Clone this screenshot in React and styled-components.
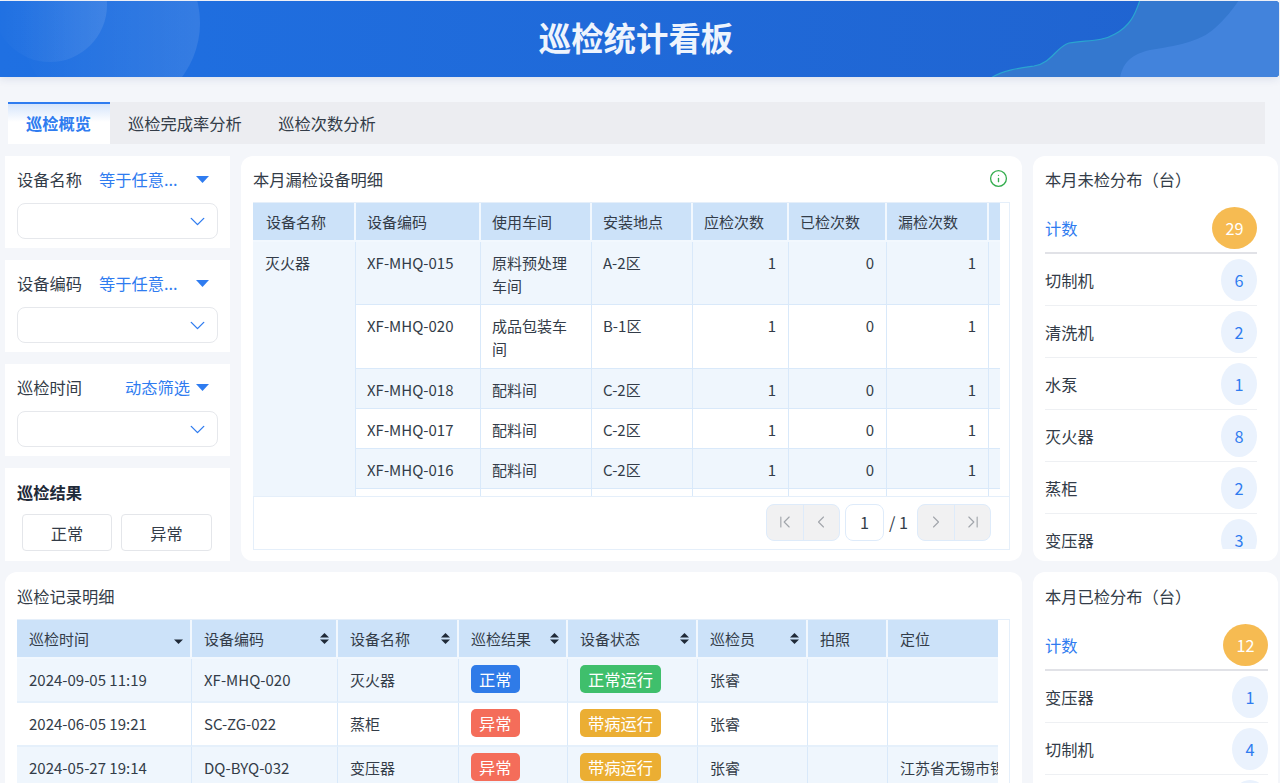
import React from 'react'
import styled, { createGlobalStyle } from 'styled-components'
import { ChevronDown, ChevronFirst, ChevronLast, ChevronLeft, ChevronRight, Info } from 'lucide-react'

const GlobalStyle = createGlobalStyle`
  html, body { margin: 0; padding: 0; height: 100%; overflow: hidden; }
  body {
    background: #f4f6fa;
    color: #333c48;
    font-family: "Noto Sans CJK SC", "Noto Sans", sans-serif;
    font-size: 16.25px;
  }
  * { box-sizing: border-box; }
`

const Page = styled.div`
  height: 783px;
  overflow: hidden;
  padding-top: 1px;
`

const Banner = styled.header`
  position: relative;
  height: 76px;
  margin-right: 1px;
  border-radius: 0 4px 4px 0;
  overflow: hidden;
  background: linear-gradient(90deg, #1f70e2 0%, #2063cf 100%);
  box-shadow: 0 2px 8px rgba(30, 60, 120, 0.12);
  display: flex;
  align-items: center;
  justify-content: center;
`

const BannerArt = styled.svg`
  position: absolute;
  left: 0;
  top: 0;
`

const BannerTitle = styled.h1`
  position: relative;
  margin: 0 0 5px -7px;
  color: #eef4fd;
  font-size: 32.4px;
  font-weight: 700;
  line-height: 44px;
`

const TabBar = styled.nav`
  display: flex;
  height: 42px;
  margin: 25px 15px 12px 8px;
  background: #ecedf1;
`

const Tab = styled.div`
  display: flex;
  align-items: center;
  padding: 0 18.5px 0 18px;
  color: ${p => (p.$active ? '#2f7cf0' : '#333c48')};
  font-weight: ${p => (p.$active ? 600 : 400)};
  ${p => p.$active && `
    padding: 0 19px 2px 18px;
    border-top: 2px solid #2f7cf0;
    background: linear-gradient(180deg, #d6e5fb 0%, #ffffff 45%);
  `}
`

const Dashboard = styled.main`
  display: grid;
  grid-template-columns: 225px 781px 245px;
  grid-template-rows: 405px 400px;
  column-gap: 11px;
  row-gap: 11px;
  padding-left: 5px;
`

const FilterColumn = styled.aside`
  display: grid;
  grid-template-rows: 92px 92px 92px 93px;
  row-gap: 12px;
`

const FilterCard = styled.section`
  background: #fff;
  padding: ${p => (p.$result ? '12px' : '11px')} 12px 0;
`

const FilterHead = styled.div`
  display: flex;
  align-items: center;
  height: 24px;
  margin-bottom: 12px;
`

const FilterLabel = styled.span`
  flex: none;
  width: 82px;
`

const FilterMode = styled.span`
  flex: 1;
  color: #2f7cf0;
  text-align: ${p => (p.$right ? 'right' : 'left')};
  padding-right: ${p => (p.$right ? '6px' : '7px')};
`

const Caret = styled.svg`
  flex: none;
  margin-right: 9px;
`

const SelectBox = styled.div`
  display: flex;
  align-items: center;
  justify-content: flex-end;
  height: 36px;
  width: 201px;
  padding-right: 7px;
  border: 1px solid #e6e8ec;
  border-radius: 8px;
  color: #2f7cf0;
`

const ResultTitle = styled.div`
  font-weight: 700;
  line-height: 24px;
  color: #1f2a38;
`

const ResultButtons = styled.div`
  display: flex;
  gap: 9px;
  margin: 10px 0 0 5px;
`

const ResultButton = styled.button`
  flex: 0 0 ${p => p.$width};
  height: 37px;
  padding: 0;
  background: #fff;
  border: 1px solid #e4e6ea;
  border-radius: 4px;
  color: #333c48;
  font: inherit;
`

const Card = styled.section`
  background: #fff;
  border-radius: 12px;
  padding: ${p => p.$pad || '11px 12px 12px'};
  overflow: hidden;
  ${p => p.$wide && 'grid-column: 1 / span 2;'}
`

const CardHead = styled.div`
  display: flex;
  align-items: center;
  justify-content: space-between;
  height: 24px;
  margin-bottom: ${p => p.$gap || '11px'};
`

const CardTitle = styled.h2`
  margin: 0;
  font-size: inherit;
  font-weight: 400;
`

const InfoMark = styled.span`
  display: flex;
  margin: -2px 2px 0 0;
  color: #34ad4e;
`

const TableFrame = styled.div`
  border: 1px solid #e5effa;
  border-left: 0;
`

const TableClip = styled.div`
  width: ${p => p.$width};
  height: ${p => p.$height};
  overflow: hidden;
`

const Grid = styled.table`
  table-layout: fixed;
  border-collapse: separate;
  border-spacing: 0;
  width: ${p => p.$width};
  font-size: 15px;
`

const HeadCell = styled.th`
  position: relative;
  height: 39px;
  padding: 0 12px 1px;
  background: #cce2f9;
  border-right: 2px solid #f2f8fe;
  border-bottom: 2px solid #f2f8fe;
  font-weight: 400;
  text-align: left;
  white-space: nowrap;
`

const MissedHead = styled(HeadCell)`
  padding-left: 11px;
  &:first-child { padding-left: 13px; }
`

const SortIcon = styled.svg`
  position: absolute;
  right: 7px;
  top: 13px;
`

const Row = styled.tr`
  height: ${p => p.$height || 'auto'};
  background: ${p => (p.$odd ? '#eff6fd' : '#fff')};
`

const Cell = styled.td`
  padding: 9px 12px 7px 11px;
  line-height: 23px;
  border-right: 1px solid #d9e9fa;
  border-bottom: 1px solid #d9e9fa;
  text-align: ${p => (p.$num ? 'right' : 'left')};
  vertical-align: top;
`

const RecordCell = styled.td`
  height: 44px;
  padding: 0 12px 2px;
  border-right: 1px solid #d9e9fa;
  border-bottom: 2px solid #e5f0fb;
  white-space: nowrap;
  overflow: hidden;
`

const MergedCell = styled(Cell)`
  padding-left: 12px;
  background: #eff6fd;
`

const Tag = styled.span`
  display: inline-block;
  height: 28px;
  padding: 0 8px;
  border-radius: 5px;
  background: ${p => p.$color};
  color: #fff;
  font-size: 16.25px;
  line-height: 28px;
  vertical-align: middle;
`

const Pager = styled.div`
  display: flex;
  align-items: center;
  justify-content: flex-end;
  height: 53px;
  padding: 0 18px 2px 0;
  border-top: 1px solid #e5effa;
  border-left: 1px solid #e5effa;
`

const PagerGroup = styled.div`
  display: flex;
  height: 37px;
  border: 1px solid #deebfa;
  border-radius: 8px;
  background: #f1f1f2;
  overflow: hidden;
`

const PagerButton = styled.span`
  display: flex;
  align-items: center;
  justify-content: center;
  width: 36px;
  color: #a3a7ad;
  & + & { border-left: 1px solid #deebfa; }
`

const PageInput = styled.span`
  width: 39px;
  height: 37px;
  margin-left: 5px;
  border: 1px solid #deebfa;
  border-radius: 8px;
  background: #fff;
  line-height: 35px;
  text-align: center;
`

const PageTotal = styled.span`
  margin: 0 9px 0 5px;
`

const StatList = styled.div`
  height: ${p => p.$height};
  margin-right: ${p => p.$inset};
  overflow: hidden;
`

const StatRow = styled.div`
  display: flex;
  align-items: center;
  justify-content: space-between;
  height: ${p => (p.$total ? '51px' : '52px')};
  border-bottom: ${p => (p.$total ? '2px solid #e1e2e7' : '1px solid #eef0f3')};
`

const StatName = styled.span`
  color: ${p => (p.$total ? '#2f7cf0' : '#333c48')};
`

const StatBadge = styled.span`
  display: flex;
  align-items: center;
  justify-content: center;
  width: ${p => (p.$total ? '45px' : '36px')};
  height: 42px;
  border-radius: 50%;
  background: ${p => (p.$total ? '#f6bb52' : '#eaf2fd')};
  color: ${p => (p.$total ? '#fff' : '#2f7cf0')};
`

const missedRows = [
  ['XF-MHQ-015', '原料预处理车间', 'A-2区', 1, 0, 1],
  ['XF-MHQ-020', '成品包装车间', 'B-1区', 1, 0, 1],
  ['XF-MHQ-018', '配料间', 'C-2区', 1, 0, 1],
  ['XF-MHQ-017', '配料间', 'C-2区', 1, 0, 1],
  ['XF-MHQ-016', '配料间', 'C-2区', 1, 0, 1],
  ['', '', '', '', '', ''],
]

const recordRows = [
  ['2024-09-05 11:19', 'XF-MHQ-020', '灭火器', '正常', '正常运行', ''],
  ['2024-06-05 19:21', 'SC-ZG-022', '蒸柜', '异常', '带病运行', ''],
  ['2024-05-27 19:14', 'DQ-BYQ-032', '变压器', '异常', '带病运行', '江苏省无锡市锡山区'],
]

const tagColors = {
  正常: '#2f7be8',
  异常: '#f46d5a',
  正常运行: '#3fbf6c',
  带病运行: '#ebae33',
}

const recordHeads = [
  ['巡检时间', 'desc'],
  ['设备编码', 'both'],
  ['设备名称', 'both'],
  ['巡检结果', 'both'],
  ['设备状态', 'both'],
  ['巡检员', 'both'],
  ['拍照', null],
  ['定位', null],
]

const unchecked = [['切制机', 6], ['清洗机', 2], ['水泵', 1], ['灭火器', 8], ['蒸柜', 2], ['变压器', 3]]
const checked = [['变压器', 1], ['切制机', 4], ['水泵', 3]]

function Filter({ label, mode, right }) {
  return (
    <FilterCard>
      <FilterHead>
        <FilterLabel>{label}</FilterLabel>
        <FilterMode $right={right}>{mode}</FilterMode>
        <Caret width="13" height="7" viewBox="0 0 13 7">
          <path d="M0 0h13L6.5 7z" fill="#2f7cf0" />
        </Caret>
      </FilterHead>
      <SelectBox>
        <ChevronDown size={25} strokeWidth={1.3} />
      </SelectBox>
    </FilterCard>
  )
}

function Sort({ type }) {
  return (
    <SortIcon width="9" height="11" viewBox="0 0 9 11">
      {type === 'both' && <path d="M4.5 0L9 4.5H0z" fill="#1f2a38" />}
      <path d="M0 6.5h9L4.5 11z" fill="#1f2a38" />
    </SortIcon>
  )
}

function StatCard({ title, total, items, listHeight, inset, pad, gap }) {
  return (
    <Card $pad={pad}>
      <CardHead $gap={gap}><CardTitle>{title}</CardTitle></CardHead>
      <StatList $height={listHeight} $inset={inset}>
        <StatRow $total>
          <StatName $total>计数</StatName>
          <StatBadge $total>{total}</StatBadge>
        </StatRow>
        {items.map(([name, count]) => (
          <StatRow key={name}>
            <StatName>{name}</StatName>
            <StatBadge>{count}</StatBadge>
          </StatRow>
        ))}
      </StatList>
    </Card>
  )
}

export default function App() {
  return (
    <Page>
      <GlobalStyle />
      <Banner>
        <BannerArt width="1279" height="76" viewBox="0 1 1279 76">
          <defs>
            <linearGradient id="glow" x1="0" x2="1" y1="0" y2="0">
              <stop offset="0" stopColor="#fff" stopOpacity="0" />
              <stop offset="1" stopColor="#fff" stopOpacity="0.1" />
            </linearGradient>
          </defs>
          <circle cx="110" cy="23" r="90" fill="url(#glow)" />
          <circle cx="50" cy="5" r="57" fill="url(#glow)" />
          <path d="M991 78C1003 70 1020 68 1034 66C1052 63 1056 47 1069 43C1085 40 1102 42 1115 34C1130 26 1135 15 1140 0H1279V78Z" fill="#3478cf" stroke="#2aa5d0" strokeWidth="1.2" />
          <path d="M1120 78C1123 62 1132 54 1150 50C1175 46 1200 42 1215 28C1226 18 1233 9 1239 0H1279V78Z" fill="#4283dc" />
        </BannerArt>
        <BannerTitle>巡检统计看板</BannerTitle>
      </Banner>

      <TabBar>
        <Tab $active>巡检概览</Tab>
        <Tab>巡检完成率分析</Tab>
        <Tab>巡检次数分析</Tab>
      </TabBar>

      <Dashboard>
        <FilterColumn>
          <Filter label="设备名称" mode="等于任意..." />
          <Filter label="设备编码" mode="等于任意..." />
          <Filter label="巡检时间" mode="动态筛选" right />
          <FilterCard $result>
            <ResultTitle>巡检结果</ResultTitle>
            <ResultButtons>
              <ResultButton $width="90px">正常</ResultButton>
              <ResultButton $width="91px">异常</ResultButton>
            </ResultButtons>
          </FilterCard>
        </FilterColumn>

        <Card>
          <CardHead>
            <CardTitle>本月漏检设备明细</CardTitle>
            <InfoMark><Info size={19} strokeWidth={1.7} /></InfoMark>
          </CardHead>
          <TableFrame>
            <TableClip $width="747px" $height="293px">
              <Grid $width="850px">
                <colgroup>
                  <col width="103" /><col width="125" /><col width="111" /><col width="101" />
                  <col width="96" /><col width="98" /><col width="102" /><col width="114" />
                </colgroup>
                <thead>
                  <tr>
                    {['设备名称', '设备编码', '使用车间', '安装地点', '应检次数', '已检次数', '漏检次数', ''].map(h => (
                      <MissedHead key={h}>{h}</MissedHead>
                    ))}
                  </tr>
                </thead>
                <tbody>
                  {missedRows.map(([code, shop, place, due, done, missed], i) => (
                    <Row key={i} $odd={i % 2 === 0} $height={i === 1 ? '64px' : i === 5 ? '40px' : undefined}>
                      {i === 0 && <MergedCell rowSpan={missedRows.length}>灭火器</MergedCell>}
                      <Cell>{code}</Cell>
                      <Cell>{shop}</Cell>
                      <Cell>{place}</Cell>
                      <Cell $num>{due}</Cell>
                      <Cell $num>{done}</Cell>
                      <Cell $num>{missed}</Cell>
                      <Cell />
                    </Row>
                  ))}
                </tbody>
              </Grid>
            </TableClip>
            <Pager>
              <PagerGroup>
                <PagerButton><ChevronFirst size={20} strokeWidth={1.4} /></PagerButton>
                <PagerButton><ChevronLeft size={20} strokeWidth={1.4} /></PagerButton>
              </PagerGroup>
              <PageInput>1</PageInput>
              <PageTotal>/ 1</PageTotal>
              <PagerGroup>
                <PagerButton><ChevronRight size={20} strokeWidth={1.4} /></PagerButton>
                <PagerButton><ChevronLast size={20} strokeWidth={1.4} /></PagerButton>
              </PagerGroup>
            </Pager>
          </TableFrame>
        </Card>

        <StatCard title="本月未检分布（台）" total={29} items={unchecked} listHeight="346px" inset="11px" pad="11px 10px 12px 12px" gap="12px" />

        <Card $wide $pad="12px">
          <CardHead><CardTitle>巡检记录明细</CardTitle></CardHead>
          <TableFrame>
            <TableClip $width="981px" $height="170px">
              <Grid $width="1100px">
                <colgroup>
                  <col width="175" /><col width="146" /><col width="121" /><col width="109" />
                  <col width="130" /><col width="110" /><col width="80" /><col width="229" />
                </colgroup>
                <thead>
                  <tr>
                    {recordHeads.map(([h, sort]) => (
                      <HeadCell key={h}>
                        {h}
                        {sort && <Sort type={sort} />}
                      </HeadCell>
                    ))}
                  </tr>
                </thead>
                <tbody>
                  {recordRows.map(([time, code, name, result, state, place], i) => (
                    <Row key={code} $odd={i % 2 === 0}>
                      <RecordCell>{time}</RecordCell>
                      <RecordCell>{code}</RecordCell>
                      <RecordCell>{name}</RecordCell>
                      <RecordCell><Tag $color={tagColors[result]}>{result}</Tag></RecordCell>
                      <RecordCell><Tag $color={tagColors[state]}>{state}</Tag></RecordCell>
                      <RecordCell>张睿</RecordCell>
                      <RecordCell />
                      <RecordCell>{place}</RecordCell>
                    </Row>
                  ))}
                </tbody>
              </Grid>
            </TableClip>
          </TableFrame>
        </Card>

        <StatCard title="本月已检分布（台）" total={12} items={checked} listHeight="300px" inset="0" pad="12px 10px 12px 12px" gap="12px" />
      </Dashboard>
    </Page>
  )
}
